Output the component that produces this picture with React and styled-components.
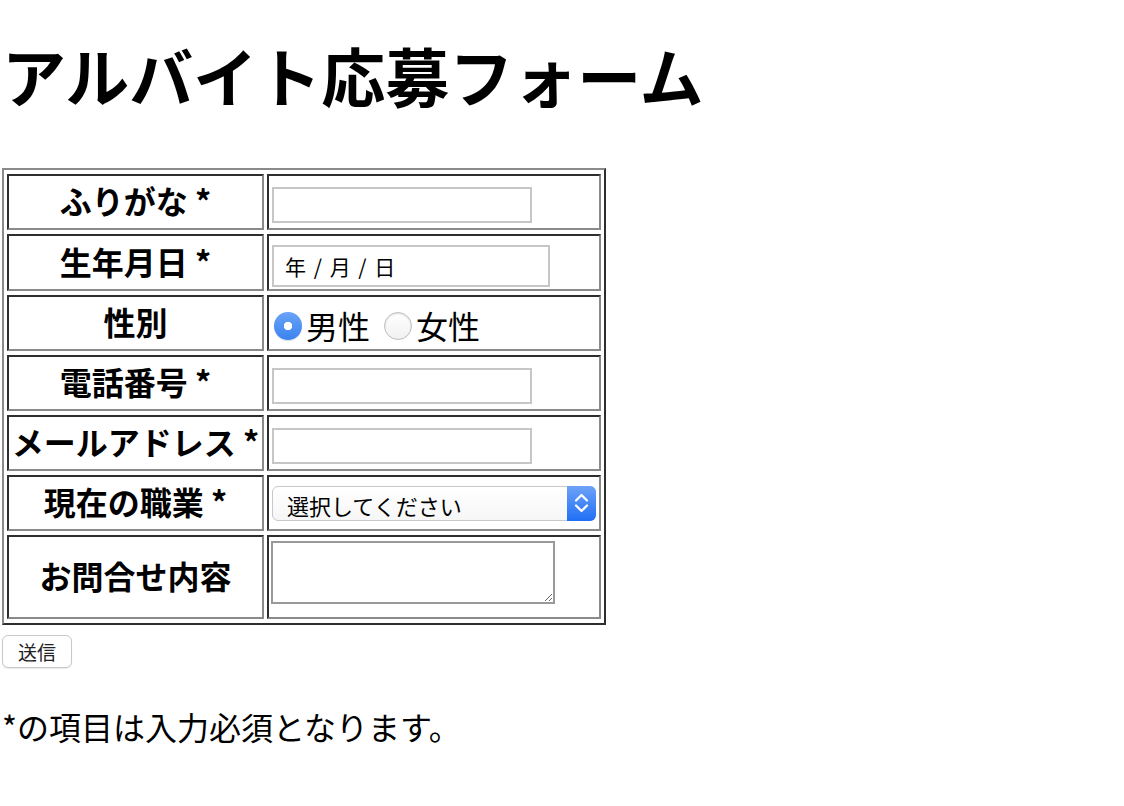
import styled, { createGlobalStyle } from 'styled-components';

const GlobalStyle = createGlobalStyle`
  body {
    margin: 0;
    background: #ffffff;
    color: #000000;
    font-family: "Noto Sans CJK JP", "Noto Sans", sans-serif;
  }
`;

const Page = styled.div`
  padding: 0 2px;
`;

const Title = styled.h1`
  margin: 42px 0 62px;
  font-size: 64px;
  line-height: 64px;
  font-weight: 700;
`;

const FormTable = styled.table`
  border-collapse: separate;
  border-spacing: 3px 4px;
  border: 2px solid;
  border-color: #8a8a8a #2e2e2e #2e2e2e #8a8a8a;
`;

const Label = styled.th`
  box-sizing: border-box;
  width: 257px;
  height: ${(p) => (p.$tall ? '84px' : '56px')};
  padding: 0 2px 4px;
  border: 2px solid;
  border-color: #2e2e2e #8a8a8a #8a8a8a #2e2e2e;
  font-size: 32px;
  font-weight: 700;
  line-height: 40px;
  text-align: center;
  vertical-align: middle;
  white-space: nowrap;
`;

const Field = styled.td`
  box-sizing: border-box;
  width: 334px;
  padding: 2px;
  border: 2px solid;
  border-color: #2e2e2e #8a8a8a #8a8a8a #2e2e2e;
  vertical-align: ${(p) => (p.$top ? 'top' : 'middle')};
`;

const TextInput = styled.input`
  display: block;
  box-sizing: border-box;
  width: ${(p) => p.$width || '260px'};
  height: ${(p) => p.$height || '36px'};
  margin: ${(p) => p.$offset || '6px'} 0 0 1px;
  padding: 0 11px;
  border: 2px solid #c6c6c6;
  background: #ffffff;
  font-family: inherit;
  font-size: 21px;
  word-spacing: 3px;
  color: #000;
  outline: none;

  &::placeholder {
    color: #000;
  }
`;

const RadioGroup = styled.div`
  display: flex;
  align-items: center;
  margin-top: 4px;
`;

const RadioLabel = styled.label`
  display: flex;
  align-items: center;
  gap: 4px;
  margin-right: 11px;
  font-size: 32px;
  line-height: 40px;
`;

const Radio = styled.input.attrs({ type: 'radio' })`
  appearance: none;
  box-sizing: border-box;
  width: 28px;
  height: 28px;
  margin: 2px 0 0 3px;
  border-radius: 50%;
  border: 1px solid #bdbdbd;
  background: linear-gradient(#ffffff, #f1f1f1);
  box-shadow: inset 0 1px 2px rgba(0, 0, 0, 0.12);

  &:checked {
    border: none;
    background: radial-gradient(circle, #ffffff 0 4px, transparent 4.5px),
      linear-gradient(#6aa3f7, #3b82f0);
    box-shadow: 0 1px 1px rgba(0, 0, 0, 0.15);
  }
`;

const SelectWrap = styled.div`
  position: relative;
  width: 324px;
  height: 35px;
  margin-left: 1px;
`;

const Select = styled.select`
  appearance: none;
  box-sizing: border-box;
  width: 100%;
  height: 100%;
  padding: 2px 40px 0 14px;
  border: 1px solid #c8c8c8;
  border-radius: 6px;
  background: linear-gradient(#ffffff, #f6f6f6);
  font-family: inherit;
  font-size: 22px;
  color: #000;
  outline: none;
`;

const SelectArrow = styled.span`
  position: absolute;
  top: 0;
  right: 0;
  width: 29px;
  height: 35px;
  border-radius: 0 6px 6px 0;
  background: linear-gradient(#6ea2f8, #1f6ff5);
  display: flex;
  align-items: center;
  justify-content: center;
  pointer-events: none;
`;

const TextArea = styled.textarea`
  display: block;
  box-sizing: border-box;
  width: 284px;
  height: 63px;
  margin: 2px 0 0 0;
  border: 2px solid #999999;
  font-family: inherit;
  font-size: 18px;
  resize: both;
  outline: none;
`;

const SubmitButton = styled.button`
  display: block;
  box-sizing: border-box;
  width: 70px;
  height: 33px;
  margin-top: 10px;
  padding: 0;
  border: 1px solid #c8c8c8;
  border-radius: 6px;
  background: #ffffff;
  box-shadow: 0 1px 1px rgba(0, 0, 0, 0.08);
  font-family: inherit;
  font-size: 19px;
  color: #222;
`;

const Note = styled.p`
  margin: 40px 0 0;
  font-size: 32px;
  line-height: 36px;
`;

function App() {
  return (
    <Page>
      <GlobalStyle />
      <Title>アルバイト応募フォーム</Title>
      <form onSubmit={(e) => e.preventDefault()}>
        <FormTable>
          <tbody>
            <tr>
              <Label>ふりがな *</Label>
              <Field>
                <TextInput type="text" />
              </Field>
            </tr>
            <tr>
              <Label>生年月日 *</Label>
              <Field>
                <TextInput
                  type="text"
                  placeholder="年 / 月 / 日"
                  $width="278px"
                  $height="42px"
                  $offset="7px"
                />
              </Field>
            </tr>
            <tr>
              <Label>性別</Label>
              <Field>
                <RadioGroup>
                  <RadioLabel>
                    <Radio name="gender" defaultChecked />
                    男性
                  </RadioLabel>
                  <RadioLabel>
                    <Radio name="gender" />
                    女性
                  </RadioLabel>
                </RadioGroup>
              </Field>
            </tr>
            <tr>
              <Label>電話番号 *</Label>
              <Field>
                <TextInput type="tel" />
              </Field>
            </tr>
            <tr>
              <Label>メールアドレス *</Label>
              <Field>
                <TextInput type="email" />
              </Field>
            </tr>
            <tr>
              <Label>現在の職業 *</Label>
              <Field>
                <SelectWrap>
                  <Select defaultValue="">
                    <option value="">選択してください</option>
                    <option value="student">学生</option>
                    <option value="worker">会社員</option>
                    <option value="other">その他</option>
                  </Select>
                  <SelectArrow>
                    <svg width="15" height="22" viewBox="0 0 15 22" fill="none">
                      <path
                        d="M2 8.5 L7.5 3 L13 8.5"
                        stroke="#fff"
                        strokeWidth="2.2"
                        strokeLinecap="round"
                        strokeLinejoin="round"
                      />
                      <path
                        d="M2 13.5 L7.5 19 L13 13.5"
                        stroke="#fff"
                        strokeWidth="2.2"
                        strokeLinecap="round"
                        strokeLinejoin="round"
                      />
                    </svg>
                  </SelectArrow>
                </SelectWrap>
              </Field>
            </tr>
            <tr>
              <Label $tall>お問合せ内容</Label>
              <Field $top>
                <TextArea />
              </Field>
            </tr>
          </tbody>
        </FormTable>
        <SubmitButton type="submit">送信</SubmitButton>
      </form>
      <Note>*の項目は入力必須となります。</Note>
    </Page>
  );
}

export default App;
